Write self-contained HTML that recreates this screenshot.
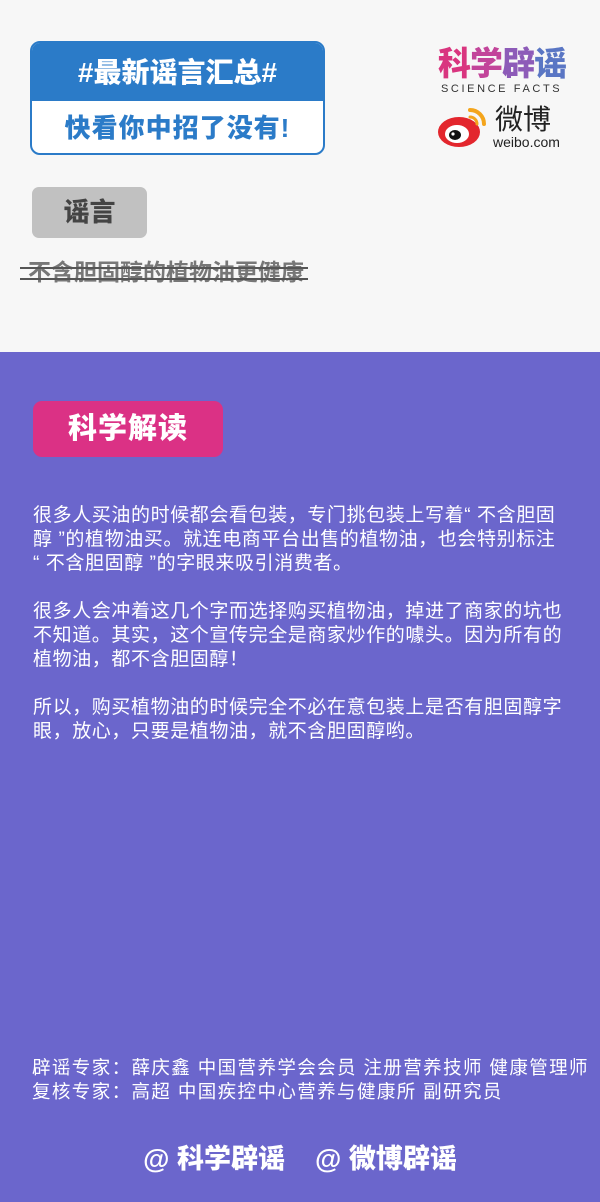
<!DOCTYPE html>
<html><head><meta charset="utf-8"><style>
*{margin:0;padding:0;box-sizing:border-box}
body{width:600px;height:1202px;overflow:hidden;font-family:"Liberation Sans","Noto Sans CJK SC",sans-serif;background:#f7f7f7;position:relative}
.abs{position:absolute}
.badge{left:30px;top:41px;width:295px;height:114px;border:2px solid #2b7bc8;border-radius:10px;background:#fff;overflow:hidden}
.badge .t{height:58px;background:#2b7bc8;color:#fff;font-weight:900;font-size:28px;text-align:center;line-height:60px}
.badge .b{color:#2b7bc8;font-weight:900;font-size:26px;text-align:center;line-height:54px;letter-spacing:1px}
.purple{left:0;top:352px;width:600px;height:850px;background:#6b66cc}
.txt{color:#fff;font-size:19px;line-height:24px;white-space:nowrap;letter-spacing:0.6px}
</style></head><body>
<div class="abs badge"><div class="t">#最新谣言汇总#</div><div class="b">快看你中招了没有!</div></div>
<div class="abs" style="left:438px;top:44px;font-size:33px;font-weight:900;letter-spacing:-1px;color:#9a4bb0;line-height:40px"><span style="color:#d9357f">科</span><span style="color:#c2449a">学</span><span style="color:#8d5bb8">辟</span><span style="color:#5a76c4">谣</span></div>
<div class="abs" style="left:441px;top:83px;font-size:11px;letter-spacing:2.6px;color:#333">SCIENCE FACTS</div>
<svg class="abs" style="left:437px;top:104px" width="55" height="45" viewBox="0 0 55 45">
<ellipse cx="22" cy="28" rx="21" ry="15" fill="#e3262d"/>
<ellipse cx="20" cy="30" rx="12" ry="9" fill="#fff"/>
<ellipse cx="18" cy="31" rx="6" ry="5" fill="#111"/>
<circle cx="16" cy="30" r="1.6" fill="#fff"/>
<path d="M33 6 A14 14 0 0 1 47 20" stroke="#f4a51c" stroke-width="4" fill="none" stroke-linecap="round"/>
<path d="M33 13 A7 7 0 0 1 40 20" stroke="#f4a51c" stroke-width="3" fill="none" stroke-linecap="round"/>
</svg>
<div class="abs" style="left:495px;top:104px;font-size:28px;color:#222;line-height:32px">微博</div>
<div class="abs" style="left:493px;top:134px;font-size:14px;color:#222">weibo.com</div>
<div class="abs" style="left:32px;top:187px;width:115px;height:51px;background:#c1c1c1;border-radius:7px;color:#444;font-weight:900;font-size:26px;text-align:center;line-height:51px">谣言</div>
<div class="abs" style="left:28px;top:257px;font-size:23px;font-weight:700;color:#777;line-height:30px;white-space:nowrap">不含胆固醇的植物油更健康</div>
<div class="abs" style="left:20px;top:267px;width:288px;height:2px;background:#555"></div>
<div class="abs" style="left:20px;top:278px;width:288px;height:2px;background:#555"></div>
<div class="abs purple"></div>
<div class="abs" style="left:33px;top:401px;width:190px;height:56px;background:#db3185;border-radius:9px;color:#fff;font-weight:900;font-size:29px;text-align:center;line-height:56px;letter-spacing:1px">科学解读</div>
<div class="abs txt" style="left:33px;top:504px">很多人买油的时候都会看包装，专门挑包装上写着“ 不含胆固<br>醇 ”的植物油买。就连电商平台出售的植物油，也会特别标注<br>“ 不含胆固醇 ”的字眼来吸引消费者。<br><br>很多人会冲着这几个字而选择购买植物油，掉进了商家的坑也<br>不知道。其实，这个宣传完全是商家炒作的噱头。因为所有的<br>植物油，都不含胆固醇！<br><br>所以，购买植物油的时候完全不必在意包装上是否有胆固醇字<br>眼，放心，只要是植物油，就不含胆固醇哟。</div>
<div class="abs txt" style="left:32px;top:1056px;font-size:18.5px;letter-spacing:1.4px">辟谣专家：薛庆鑫 中国营养学会会员 注册营养技师 健康管理师<br>复核专家：高超 中国疾控中心营养与健康所 副研究员</div>
<div class="abs" style="left:0;top:1141px;width:600px;text-align:center;color:#fff;font-weight:900;font-size:27px;line-height:36px;white-space:pre">@ 科学辟谣    @ 微博辟谣</div>
</body></html>
